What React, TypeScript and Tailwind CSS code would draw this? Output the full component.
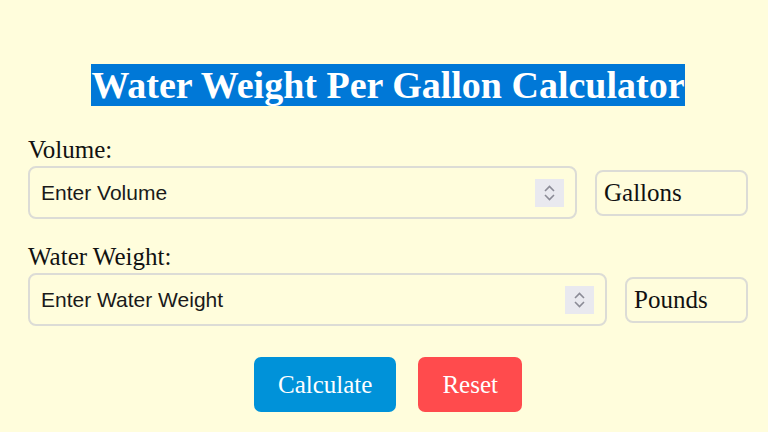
import React from "react";

function Spinner() {
  return (
    <div className="flex h-[28px] w-[29px] flex-col items-center justify-center gap-[2px] bg-[#e9e9ef]">
      <svg width="11" height="7" viewBox="0 0 11 7" fill="none">
        <path d="M1 6l4.5-4.5L10 6" stroke="#8b8b96" strokeWidth="1.6" />
      </svg>
      <svg width="11" height="7" viewBox="0 0 11 7" fill="none">
        <path d="M1 1l4.5 4.5L10 1" stroke="#8b8b96" strokeWidth="1.6" />
      </svg>
    </div>
  );
}

function Field({ label, placeholder, unit, unitWidth }: { label: string; placeholder: string; unit: string; unitWidth: string }) {
  return (
    <div className="flex flex-col gap-[2px]">
      <label className="text-[25px] leading-[28px] text-[#111]">{label}</label>
      <div className="flex items-center gap-[18px]">
        <div className="flex h-[53px] flex-1 items-center rounded-[8px] border-2 border-[#dcdcd6] pl-[11px] pr-[11px]">
          <input
            type="text"
            placeholder={placeholder}
            className="min-w-0 flex-1 bg-transparent text-[21px] text-[#111] outline-none placeholder:text-[#1a1a1a] [font-family:'Liberation_Sans',Arial,sans-serif]"
          />
          <Spinner />
        </div>
        <div className={`flex h-[46px] items-center rounded-[8px] border-2 border-[#dcdcd6] pl-[7px] text-[25px] text-[#111] ${unitWidth}`}>
          {unit}
        </div>
      </div>
    </div>
  );
}

export default function App() {
  return (
    <div className="min-h-[432px] bg-[#fffddc] pt-[64px] [font-family:'Liberation_Serif','Times_New_Roman',serif]">
      <div className="ml-[28px] flex w-[720px] flex-col gap-[24px]">
        <h1 className="mb-[6px] text-center text-[38px] font-bold leading-[42px]">
          <span className="bg-[#0078d7] text-white">Water Weight Per Gallon Calculator</span>
        </h1>
        <Field label="Volume:" placeholder="Enter Volume" unit="Gallons" unitWidth="w-[153px]" />
        <Field label="Water Weight:" placeholder="Enter Water Weight" unit="Pounds" unitWidth="w-[123px]" />
        <div className="mt-[7px] flex justify-center gap-[22px]">
          <button className="h-[55px] rounded-[7px] bg-[#0092d9] px-[24px] text-[25px] text-white">Calculate</button>
          <button className="h-[55px] rounded-[7px] bg-[#ff4b4d] px-[24px] text-[25px] text-white">Reset</button>
        </div>
      </div>
    </div>
  );
}
